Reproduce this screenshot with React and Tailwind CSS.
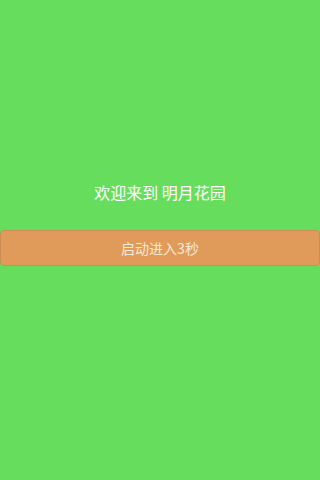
export default function App() {
  return (
    <div className="h-[480px] w-[320px] bg-[#67dd5d] pt-[180px] font-['Noto_Sans_CJK_SC',sans-serif]">
      <h1 className="text-center text-[16px] leading-6 text-white">欢迎来到 明月花园</h1>
      <button className="mt-[26px] flex h-[36px] w-full items-center justify-center rounded-[4px] border border-[#c98d55] bg-[#e09a5a] text-[14px] text-[#f8ead9]">
        启动进入3秒
      </button>
    </div>
  );
}
